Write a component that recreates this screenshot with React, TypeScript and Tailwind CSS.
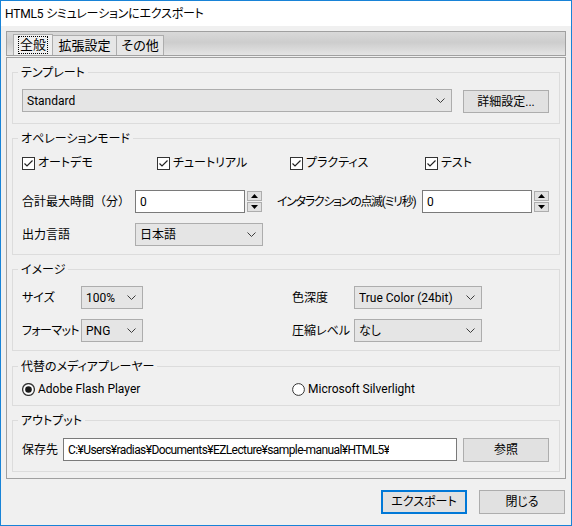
import type { ReactNode } from "react";
import clsx from "clsx";

function Chevron() {
  return (
    <svg width="9" height="5" viewBox="0 0 9 5" className="shrink-0">
      <path d="M0.5 0.5 L4.5 4.5 L8.5 0.5" fill="none" stroke="#3c3c3c" strokeWidth="1" />
    </svg>
  );
}

function Dropdown({ value, className }: { value: string; className?: string }) {
  return (
    <div
      className={clsx(
        "flex h-[23px] items-center justify-between border border-[#adadad] bg-[#e5e5e5] pl-[4px] pr-[6px]",
        className,
      )}
    >
      <span className="truncate">{value}</span>
      <Chevron />
    </div>
  );
}

function TextBox({ value, className, textClass }: { value: string; className?: string; textClass?: string }) {
  return (
    <div className={clsx("flex h-[23px] items-center border border-[#7a7a7a] bg-white pl-[4px]", className)}>
      <span className={clsx("truncate", textClass)}>{value}</span>
    </div>
  );
}

function Spinner() {
  return (
    <div className="ml-[2px] flex flex-col gap-[1px] pt-[1px]">
      <div className="flex h-[10px] w-[15px] items-center justify-center border border-[#adadad] bg-[#e1e1e1]">
        <svg width="7" height="4" viewBox="0 0 7 4">
          <path d="M0 4 L3.5 0 L7 4 Z" fill="#000" />
        </svg>
      </div>
      <div className="flex h-[10px] w-[15px] items-center justify-center border border-[#adadad] bg-[#e1e1e1]">
        <svg width="7" height="4" viewBox="0 0 7 4">
          <path d="M0 0 L3.5 4 L7 0 Z" fill="#000" />
        </svg>
      </div>
    </div>
  );
}

function Check({ label, className }: { label: string; className?: string }) {
  return (
    <div className={clsx("flex h-[16px] items-center gap-[3px]", className)}>
      <svg width="13" height="13" viewBox="0 0 13 13" className="shrink-0">
        <rect x="0.5" y="0.5" width="12" height="12" fill="#fff" stroke="#333" />
        <path d="M2.5 6.5 L5 9 L10.5 3.5" fill="none" stroke="#222" strokeWidth="1.2" />
      </svg>
      <span className="whitespace-nowrap">{label}</span>
    </div>
  );
}

function Radio({ label, checked, className }: { label: string; checked?: boolean; className?: string }) {
  return (
    <div className={clsx("flex h-[16px] items-center gap-[3px]", className)}>
      <svg width="13" height="13" viewBox="0 0 13 13" className="shrink-0">
        <circle cx="6.5" cy="6.5" r="5.9" fill="#fff" stroke="#333" strokeWidth={checked ? 1.3 : 1} />
        {checked && <circle cx="6.5" cy="6.5" r="3.3" fill="#1a1a1a" />}
      </svg>
      <span className="whitespace-nowrap">{label}</span>
    </div>
  );
}

function WinButton({ children, primary, className }: { children: ReactNode; primary?: boolean; className?: string }) {
  return (
    <button
      type="button"
      className={clsx(
        "flex w-[86px] shrink-0 items-center justify-center whitespace-nowrap bg-[#e1e1e1]",
        primary ? "border-2 border-[#0078d7]" : "border border-[#adadad]",
        className,
      )}
    >
      {children}
    </button>
  );
}

function Group({ title, className, children }: { title: string; className?: string; children: ReactNode }) {
  return (
    <fieldset className={clsx("border border-[#dcdcdc] px-[9px]", className)}>
      <legend className="-ml-[4px] px-[3px] pt-[2px] leading-[16px]">{title}</legend>
      {children}
    </fieldset>
  );
}

function Label({ children, className }: { children: ReactNode; className?: string }) {
  return <span className={clsx("shrink-0 whitespace-nowrap", className)}>{children}</span>;
}

export default function App() {
  return (
    <div className="flex h-[526px] w-[572px] flex-col border border-[#1883d7] bg-[#f0f0f0] font-['Roboto','Noto_Sans_CJK_JP',sans-serif] text-[12px] leading-[16px] text-black [font-feature-settings:'palt']">
      <div className="flex h-[25px] shrink-0 items-center bg-white pl-[4px] tracking-[-0.2px]">
        HTML5 シミュレーションにエクスポート
      </div>

      <div className="flex flex-1 flex-col px-[5px] pt-[5px]">
        {/* tab strip */}
        <div className="flex h-[25px] items-end border border-[#a0a0a0] bg-[linear-gradient(180deg,#d9d9d9_0%,#cdcdcd_45%,#e4e4e4_100%)] pl-[6px]">
          <div className="flex h-[21px] w-[40px] items-center justify-center border border-b-0 border-[#adadad] bg-[#f0f0f0] text-[13px]">
            <span className="border border-dotted border-black px-[1px] leading-[16px]">全般</span>
          </div>
          <div className="flex h-[20px] w-[64px] items-center justify-center border border-b-0 border-l-0 border-[#adadad] bg-[#e6e6e6] text-[13px]">
            拡張設定
          </div>
          <div className="flex h-[20px] w-[47px] items-center justify-center border border-b-0 border-l-0 border-[#adadad] bg-[#e6e6e6] text-[13px]">
            その他
          </div>
        </div>

        {/* tab page */}
        <div className="mt-[1px] flex h-[422px] flex-col gap-[5px] border border-[#a0a0a0] px-[5px] pt-[5px]">
          <Group title="テンプレート" className="h-[61px]">
            <div className="mt-[8px] flex items-start">
              <Dropdown value="Standard" className="w-[430px] pl-[3px]" />
              <WinButton className="ml-[11px] mt-[1px] h-[23px]">詳細設定...</WinButton>
            </div>
          </Group>

          <Group title="オペレーションモード" className="h-[126px]">
            <div className="mt-[8px] flex">
              <Check label="オートデモ" className="w-[135px]" />
              <Check label="チュートリアル" className="w-[133px]" />
              <Check label="プラクティス" className="w-[135px]" />
              <Check label="テスト" />
            </div>
            <div className="mt-[19px] flex items-start">
              <Label className="w-[113px] pt-[4px] [font-feature-settings:normal]">合計最大時間（分）</Label>
              <TextBox value="0" className="w-[110px]" />
              <Spinner />
              <Label className="ml-[15px] w-[145px] pt-[4px] tracking-[-1.3px]">インタラクションの点滅(ミリ秒)</Label>
              <TextBox value="0" className="w-[110px]" />
              <Spinner />
            </div>
            <div className="mt-[10px] flex items-center">
              <Label className="w-[113px]">出力言語</Label>
              <Dropdown value="日本語" className="w-[128px]" />
            </div>
          </Group>

          <Group title="イメージ" className="h-[91px]">
            <div className="mt-[8px] flex items-center">
              <div className="flex w-[270px] items-center">
                <Label className="w-[59px]">サイズ</Label>
                <Dropdown value="100%" className="w-[62px]" />
              </div>
              <Label className="w-[62px]">色深度</Label>
              <Dropdown value="True Color (24bit)" className="w-[128px]" />
            </div>
            <div className="mt-[10px] flex items-center">
              <div className="flex w-[270px] items-center">
                <Label className="w-[59px] tracking-[-0.6px]">フォーマット</Label>
                <Dropdown value="PNG" className="w-[62px]" />
              </div>
              <Label className="w-[62px]">圧縮レベル</Label>
              <Dropdown value="なし" className="w-[128px]" />
            </div>
          </Group>

          <Group title="代替のメディアプレーヤー" className="mt-[1px] h-[49px]">
            <div className="mt-[6px] flex">
              <Radio label="Adobe Flash Player" checked className="w-[270px]" />
              <Radio label="Microsoft Silverlight" />
            </div>
          </Group>

          <Group title="アウトプット" className="h-[61px]">
            <div className="mt-[9px] flex items-start">
              <Label className="w-[41px] pt-[4px]">保存先</Label>
              <TextBox
                value="C:¥Users¥radias¥Documents¥EZLecture¥sample-manual¥HTML5¥"
                className="w-[394px]"
                textClass="tracking-[-0.6px]"
              />
              <WinButton className="ml-[6px] h-[24px]">参照</WinButton>
            </div>
          </Group>
        </div>

        <div className="mr-[1px] mt-[11px] flex justify-end gap-[12px]">
          <WinButton primary className="h-[24px]">
            エクスポート
          </WinButton>
          <WinButton className="h-[24px]">閉じる</WinButton>
        </div>
      </div>
    </div>
  );
}
